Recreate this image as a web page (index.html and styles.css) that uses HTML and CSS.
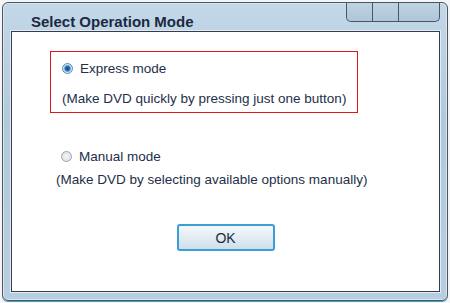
FILE: index.html
```html
<!DOCTYPE html>
<html lang="en">
<head>
    <meta charset="UTF-8">
    <title>Select Operation Mode</title>
    <link rel="stylesheet" href="styles.css">
</head>
<body>
    <div class="window">
        <div class="titlebar">
            <span class="title">Select Operation Mode</span>
            <div class="caption-buttons">
                <span class="cap-btn min"></span>
                <span class="cap-btn max"></span>
                <span class="cap-btn close"></span>
            </div>
        </div>
        <div class="content">
            <div class="option selected-box">
                <div class="choice">
                    <span class="radio checked"></span>
                    <span>Express mode</span>
                </div>
                <p class="note">(Make DVD quickly by pressing just one button)</p>
            </div>
            <div class="option manual">
                <div class="choice">
                    <span class="radio"></span>
                    <span>Manual mode</span>
                </div>
                <p class="note">(Make DVD by selecting available options manually)</p>
            </div>
            <div class="actions">
                <button class="ok">OK</button>
            </div>
        </div>
    </div>
</body>
</html>
```

FILE: styles.css
```css
body {
    margin: 0;
    padding: 0;
    background: #f4f5f6;
    font-family: "Liberation Sans", Arial, sans-serif;
}

.window {
    margin: 2px;
    width: 446px;
    height: 299px;
    box-sizing: border-box;
    border: 1px solid #4f555d;
    border-radius: 6px;
    background: linear-gradient(to bottom, #c3d8e8, #b0c9dc 40%, #b7cee0);
    box-shadow: inset 0 0 0 1px #dbe7f0, 0 1px 0 #3aa6d6;
    padding: 0 7px 8px 8px;
    display: flex;
    flex-direction: column;
}

.titlebar {
    height: 28px;
    display: flex;
    justify-content: space-between;
    align-items: flex-start;
}

.title {
    font-size: 15px;
    font-weight: bold;
    color: #1c2940;
    padding: 10px 0 0 20px;
}

.caption-buttons {
    display: flex;
    height: 18px;
    border: 1px solid #4c5566;
    border-top: none;
    border-radius: 0 0 5px 5px;
    background: linear-gradient(to bottom, #bed3e3, #aec6d8);
}

.cap-btn {
    display: block;
    height: 18px;
}

.cap-btn.min {
    width: 25px;
    border-right: 1px solid #4c5566;
}

.cap-btn.max {
    width: 25px;
    border-right: 1px solid #4c5566;
}

.cap-btn.close {
    width: 40px;
}

.content {
    flex: 1;
    background: #fff;
    border: 1px solid #363c4a;
    box-shadow: 0 0 0 1px #e4ecf3;
    padding: 19px 0 0 38px;
    color: #232f4a;
    font-size: 13.5px;
}

.option {
    width: 308px;
    box-sizing: border-box;
}

.selected-box {
    height: 62px;
    border: 1px solid #e0161c;
    padding: 9px 0 0 11px;
}

.choice {
    display: flex;
    align-items: center;
    gap: 7px;
    height: 14px;
}

.note {
    margin: 0;
    white-space: nowrap;
}

.selected-box .note {
    margin-top: 16px;
}

.manual {
    padding: 36px 0 0 11px;
    width: 380px;
}

.manual .note {
    margin: 9px 0 0 -5px;
}

.radio {
    width: 11px;
    height: 11px;
    border-radius: 50%;
    box-sizing: border-box;
    border: 1px solid #9aa3ab;
    background: radial-gradient(circle, #f4f4f4 0, #d9dcdf 100%);
}

.radio.checked {
    border-color: #5b8fb6;
    background: radial-gradient(circle, #1a3f66 0, #2a6aa6 2px, #5fa6dc 3px, #cfe3f2 4px);
}

.actions {
    display: flex;
    justify-content: center;
    padding: 37px 38px 0 0;
}

.ok {
    width: 98px;
    height: 27px;
    border: 2px solid #3a9fd6;
    border-radius: 3px;
    background: linear-gradient(to bottom, #f4f8fb, #e2ecf3 50%, #cfdfea);
    font-family: "Liberation Sans", Arial, sans-serif;
    font-size: 14px;
    color: #1c2940;
    padding: 0;
}
```
